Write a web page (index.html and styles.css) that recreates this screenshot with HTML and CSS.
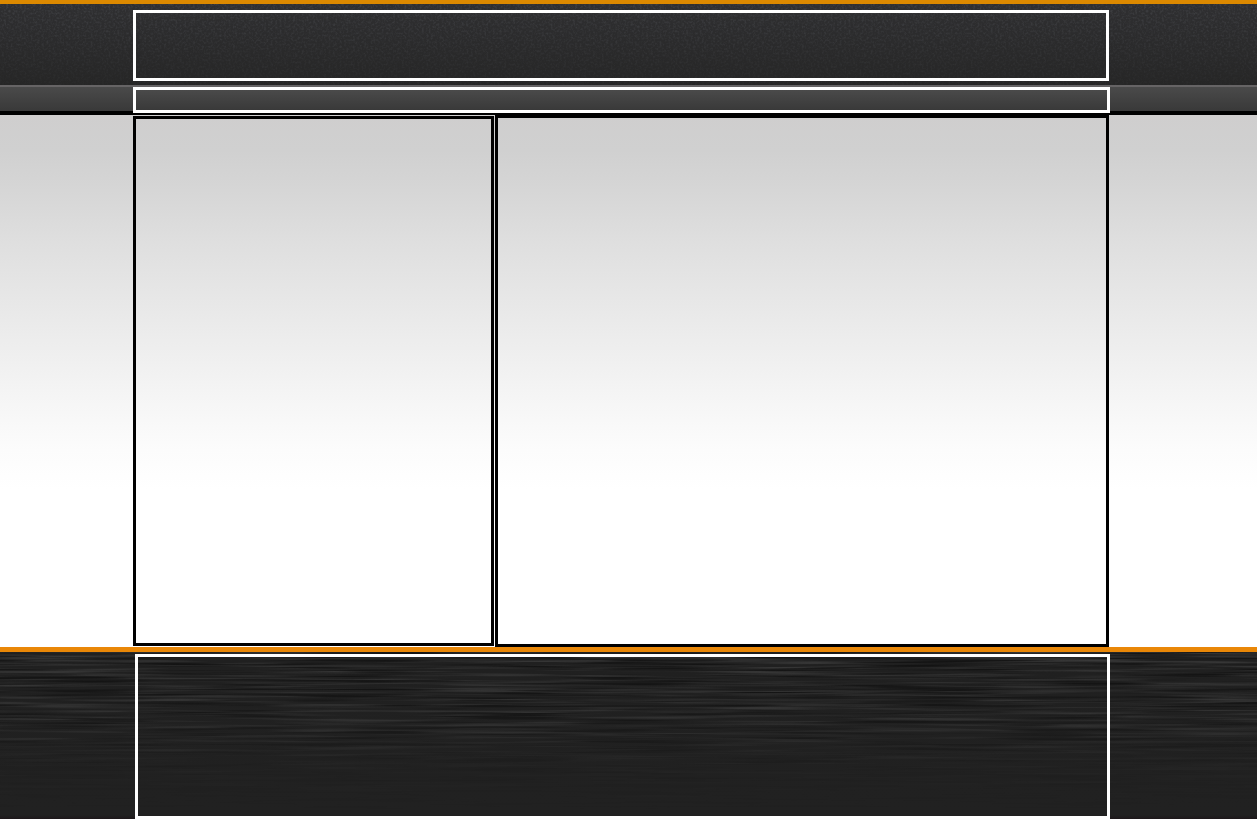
FILE: index.html
```html
<!DOCTYPE html>
<html lang="en">
<head>
<meta charset="utf-8">
<title>Layout</title>
<link rel="stylesheet" href="styles.css">
</head>
<body>
<header class="header">
  <svg class="texture" aria-hidden="true">
    <filter id="grain" x="0" y="0" width="100%" height="100%" color-interpolation-filters="sRGB">
      <feTurbulence type="fractalNoise" baseFrequency="0.45" numOctaves="2" seed="4"/>
      <feColorMatrix type="matrix" values="0 0 0 0 0.35  0 0 0 0 0.36  0 0 0 0 0.38  2.6 0 0 0 -1.1"/>
    </filter>
    <rect width="100%" height="100%" filter="url(#grain)"/>
  </svg>
  <div class="header-box"></div>
</header>
<nav class="nav"><div class="nav-box"></div></nav>
<main class="main">
  <aside class="sidebar"></aside>
  <section class="content"></section>
</main>
<footer class="footer">
  <svg class="texture" aria-hidden="true">
    <filter id="light-brush" x="0" y="0" width="100%" height="100%" color-interpolation-filters="sRGB">
      <feTurbulence type="fractalNoise" baseFrequency="0.007 0.36" numOctaves="2" seed="7"/>
      <feColorMatrix type="matrix" values="0 0 0 0 0.3  0 0 0 0 0.3  0 0 0 0 0.3  3 0 0 0 -1.35"/>
    </filter>
    <filter id="dark-brush" x="0" y="0" width="100%" height="100%" color-interpolation-filters="sRGB">
      <feTurbulence type="fractalNoise" baseFrequency="0.007 0.36" numOctaves="2" seed="19"/>
      <feColorMatrix type="matrix" values="0 0 0 0 0.04  0 0 0 0 0.04  0 0 0 0 0.04  4 0 0 0 -2"/>
    </filter>
    <rect width="100%" height="100%" filter="url(#light-brush)"/>
    <rect width="100%" height="100%" filter="url(#dark-brush)"/>
  </svg>
  <div class="footer-box"></div>
</footer>
</body>
</html>
```
FILE: styles.css
```css
* { box-sizing: border-box; }

body {
  margin: 0;
  height: 819px;
  overflow: hidden;
  background: #fff;
}

.texture {
  position: absolute;
  inset: 0;
  width: 100%;
  height: 100%;
}

.header {
  position: relative;
  height: 85px;
  padding: 6px 148px 4px 133px;
  border-top: 4px solid #dc8900;
  background: linear-gradient(#2f2f31, #262626);
}

.header .texture {
  opacity: 0.35;
  -webkit-mask-image: linear-gradient(#000, rgba(0, 0, 0, 0.25));
  mask-image: linear-gradient(#000, rgba(0, 0, 0, 0.25));
}

.header-box {
  position: relative;
  height: 71px;
  border: 3px solid #fff;
}

.nav {
  height: 30px;
  padding: 0 147px 0 133px;
  border-top: 2px solid #666465;
  border-bottom: 4px solid #000;
  background: linear-gradient(#4a4a4a, #393939) padding-box;
}

.nav-box {
  height: 26px;
  border: 3px solid #fff;
  background: linear-gradient(#4a4a4a, #393939);
}

.main {
  display: grid;
  grid-template-columns: 361px 614px;
  column-gap: 1px;
  height: 532px;
  padding-left: 133px;
  background: linear-gradient(#cfcece 0, #d0d0d0 35px, #d5d5d5 70px, #dfdfdf 128px, #eaeaea 205px, #f4f4f4 275px, #fcfcfc 335px, #fff 375px);
}

.sidebar {
  margin: 1px 0;
  border: 3px solid #000;
}

.content {
  border: 3px solid #000;
}

.footer {
  position: relative;
  height: 172px;
  padding: 2px 147px 0 135px;
  border-top: 5px solid #e98707;
  background: linear-gradient(#202020, #212121 163px, #1d171a 167px);
}

.footer .texture {
  opacity: 0.6;
  -webkit-mask-image: linear-gradient(#000 0, rgba(0, 0, 0, 0.75) 35%, rgba(0, 0, 0, 0.15) 68%, transparent 95%);
  mask-image: linear-gradient(#000 0, rgba(0, 0, 0, 0.75) 35%, rgba(0, 0, 0, 0.15) 68%, transparent 95%);
}

.footer-box {
  position: relative;
  height: 165px;
  border: 3px solid #fff;
}
```
